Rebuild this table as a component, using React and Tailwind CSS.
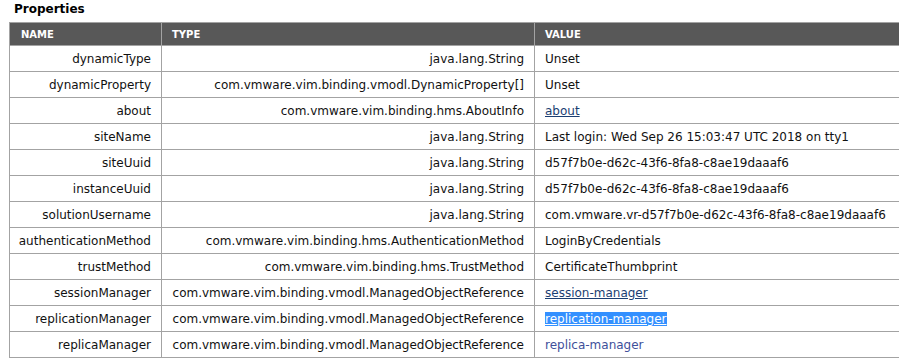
import React from 'react';

const rows = [
    { name: 'dynamicType', type: 'java.lang.String', value: 'Unset' },
    { name: 'dynamicProperty', type: 'com.vmware.vim.binding.vmodl.DynamicProperty[]', value: 'Unset' },
    { name: 'about', type: 'com.vmware.vim.binding.hms.AboutInfo', value: 'about', kind: 'link' },
    { name: 'siteName', type: 'java.lang.String', value: 'Last login: Wed Sep 26 15:03:47 UTC 2018 on tty1' },
    { name: 'siteUuid', type: 'java.lang.String', value: 'd57f7b0e-d62c-43f6-8fa8-c8ae19daaaf6' },
    { name: 'instanceUuid', type: 'java.lang.String', value: 'd57f7b0e-d62c-43f6-8fa8-c8ae19daaaf6' },
    { name: 'solutionUsername', type: 'java.lang.String', value: 'com.vmware.vr-d57f7b0e-d62c-43f6-8fa8-c8ae19daaaf6' },
    { name: 'authenticationMethod', type: 'com.vmware.vim.binding.hms.AuthenticationMethod', value: 'LoginByCredentials' },
    { name: 'trustMethod', type: 'com.vmware.vim.binding.hms.TrustMethod', value: 'CertificateThumbprint' },
    { name: 'sessionManager', type: 'com.vmware.vim.binding.vmodl.ManagedObjectReference', value: 'session-manager', kind: 'link' },
    { name: 'replicationManager', type: 'com.vmware.vim.binding.vmodl.ManagedObjectReference', value: 'replication-manager', kind: 'selected' },
    { name: 'replicaManager', type: 'com.vmware.vim.binding.vmodl.ManagedObjectReference', value: 'replica-manager', kind: 'visited' },
];

const renderValue = (row) => {
    if (row.kind === 'link') {
        return <a className="text-[#1b3e72] underline">{row.value}</a>;
    }
    if (row.kind === 'selected') {
        return <a className="bg-[#3390ff] text-white underline">{row.value}</a>;
    }
    if (row.kind === 'visited') {
        return <a className="text-[#40509a]">{row.value}</a>;
    }
    return row.value;
};

const App = () => {
    return (
        <div className="w-[899px] h-[358px] overflow-hidden bg-white text-[#111] font-['DejaVu_Sans',sans-serif] text-[12px]">
            <h2 className="pl-[14px] pt-[1px] h-[22px] text-[12px] font-bold leading-[17px] text-black">Properties</h2>
            <table className="ml-[9px] w-[892px] border-collapse table-fixed">
                <colgroup>
                    <col className="w-[152px]" />
                    <col className="w-[373px]" />
                    <col />
                </colgroup>
                <thead>
                    <tr className="h-[23px] bg-[#585858] text-white text-[10px] font-bold uppercase">
                        <th className="border border-[#a3a3a3] px-[11px] text-left">Name</th>
                        <th className="border border-[#a3a3a3] px-[10px] text-left">Type</th>
                        <th className="border border-[#a3a3a3] px-[10px] text-left">Value</th>
                    </tr>
                </thead>
                <tbody>
                    {rows.map((row) => (
                        <tr key={row.name} className="h-[26px]">
                            <td className="border border-[#a3a3a3] pr-[10px] text-right whitespace-nowrap">{row.name}</td>
                            <td className="border border-[#a3a3a3] pr-[10px] text-right whitespace-nowrap">{row.type}</td>
                            <td className="border border-[#a3a3a3] pl-[10px] text-left whitespace-nowrap">{renderValue(row)}</td>
                        </tr>
                    ))}
                </tbody>
            </table>
        </div>
    );
};

export default App;
